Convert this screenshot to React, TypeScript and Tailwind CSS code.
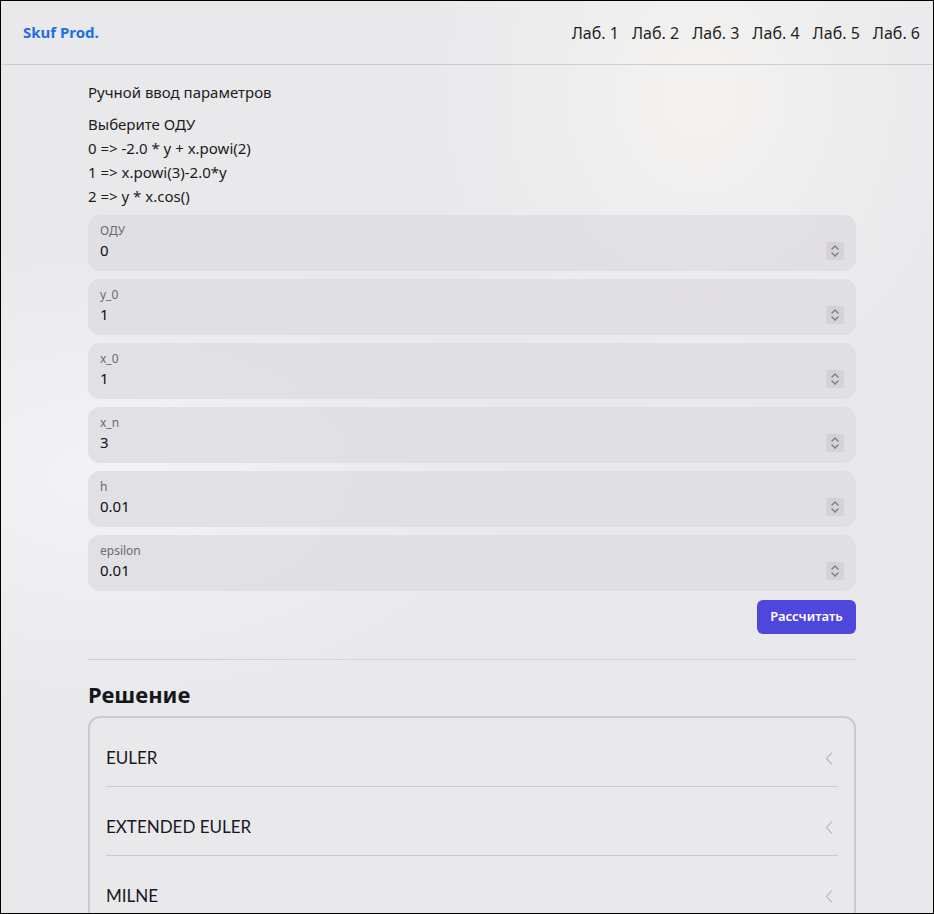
const labs = ['Лаб. 1', 'Лаб. 2', 'Лаб. 3', 'Лаб. 4', 'Лаб. 5', 'Лаб. 6'];

const fields = [
  { label: 'ОДУ', value: '0' },
  { label: 'y_0', value: '1' },
  { label: 'x_0', value: '1' },
  { label: 'x_n', value: '3' },
  { label: 'h', value: '0.01' },
  { label: 'epsilon', value: '0.01' },
];

const methods = ['EULER', 'EXTENDED EULER', 'MILNE'];

function Spinner() {
  return (
    <div className="w-[18px] h-[18px] rounded-[2px] bg-[#d4d2d8] flex items-center justify-center">
      <svg width="10" height="14" viewBox="0 0 10 14" fill="none" stroke="#7d7a85" strokeWidth="1.4" strokeLinecap="round" strokeLinejoin="round">
        <path d="M2 5 L5 2 L8 5" />
        <path d="M2 9 L5 12 L8 9" />
      </svg>
    </div>
  );
}

export default function App() {
  return (
    <div
      className="h-[914px] overflow-hidden border border-black bg-[#e9e8eb] bg-[radial-gradient(ellipse_at_75%_10%,#f4f3f1_0%,transparent_28%),radial-gradient(ellipse_at_12%_52%,#f3f3f5_0%,transparent_35%)] text-[#1c1c1c]"
      style={{ fontFamily: '"Noto Sans", "Open Sans", sans-serif' }}
    >
      <header className="h-[64px] flex items-center justify-between pl-[22px] pr-[13px] border-b border-[#cdccd0]">
        <span className="text-[15px] font-bold text-[#1d6fe2]">Skuf Prod.</span>
        <nav className="flex gap-[13px] text-[16px] text-[#1f1f1f]">
          {labs.map((l) => (
            <span key={l}>{l}</span>
          ))}
        </nav>
      </header>

      <main className="w-[768px] ml-[87px] pt-[15px]">
        <p className="text-[15px] leading-[24px]">Ручной ввод параметров</p>
        <div className="mt-[8px] text-[15px] leading-[24px]">
          <p>Выберите ОДУ</p>
          <p>0 =&gt; -2.0 * y + x.powi(2)</p>
          <p>1 =&gt; x.powi(3)-2.0*y</p>
          <p>2 =&gt; y * x.cos()</p>
        </div>

        <div className="mt-[7px] flex flex-col gap-[8px]">
          {fields.map((f) => (
            <div
              key={f.label}
              className="h-[56px] rounded-xl bg-[#dfdee2]/90 pl-[12px] pr-[12px] pt-[8px] flex items-start justify-between"
            >
              <div className="flex flex-col">
                <span className="text-[12px] leading-[16px] text-[#6b6a72]">{f.label}</span>
                <span className="text-[15px] leading-[22px] text-[#111]">{f.value}</span>
              </div>
              <div className="mt-[19px]">
                <Spinner />
              </div>
            </div>
          ))}
        </div>

        <div className="flex justify-end mt-[9px]">
          <button className="h-[34px] w-[99px] rounded-md bg-[#4f46dc] text-white text-[13px] font-semibold">
            Рассчитать
          </button>
        </div>

        <div className="mt-[25px] border-t border-[#d2d1d5]" />

        <h2 className="mt-[20px] text-[22px] leading-[28px] font-bold text-[#15171c]">Решение</h2>

        <div className="mt-[8px] rounded-xl border-2 border-[#cbcace] px-[16px]" style={{ fontFamily: 'Lato, sans-serif' }}>
          {methods.map((m, i) => (
            <div
              key={m}
              className={`h-[69px] pt-[29px] flex items-start justify-between ${i < methods.length - 1 ? 'border-b border-[#cbcace]' : ''}`}
            >
              <span className="text-[17px] leading-[22px] text-[#16191f]">{m}</span>
              <svg width="8" height="13" viewBox="0 0 8 13" fill="none" stroke="#aeadb3" strokeWidth="1.1" strokeLinecap="round" strokeLinejoin="round" className="mt-[5px] mr-[5px]">
                <path d="M6.5 1 L1.5 6.5 L6.5 12" />
              </svg>
            </div>
          ))}
        </div>
      </main>
    </div>
  );
}
